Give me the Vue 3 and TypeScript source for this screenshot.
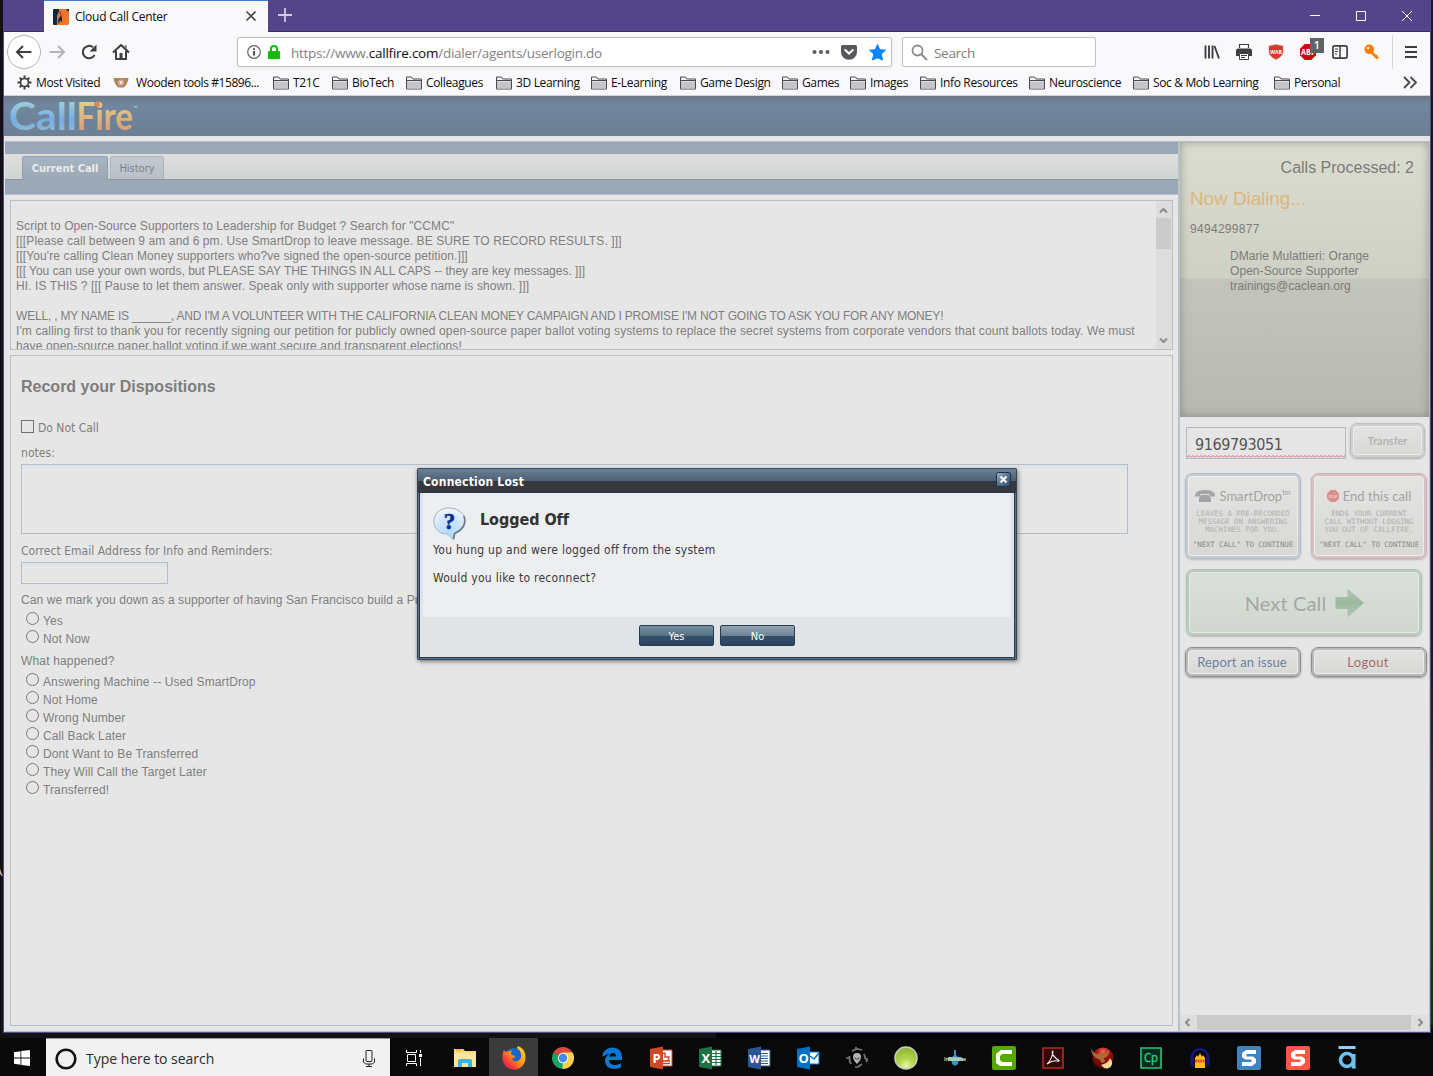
<script setup lang="ts">
import { ref } from 'vue'

interface Bookmark { label: string; kind: 'gear' | 'bowl' | 'folder' }

const bookmarks: Bookmark[] = [
  { label: 'Most Visited', kind: 'gear' },
  { label: 'Wooden tools #15896...', kind: 'bowl' },
  { label: 'T21C', kind: 'folder' },
  { label: 'BioTech', kind: 'folder' },
  { label: 'Colleagues', kind: 'folder' },
  { label: '3D Learning', kind: 'folder' },
  { label: 'E-Learning', kind: 'folder' },
  { label: 'Game Design', kind: 'folder' },
  { label: 'Games', kind: 'folder' },
  { label: 'Images', kind: 'folder' },
  { label: 'Info Resources', kind: 'folder' },
  { label: 'Neuroscience', kind: 'folder' },
  { label: 'Soc & Mob Learning', kind: 'folder' },
  { label: 'Personal', kind: 'folder' },
]

const scriptLines: string[] = [
  'Script to Open-Source Supporters to Leadership for Budget ? Search for "CCMC"',
  '[[[Please call between 9 am and 6 pm. Use SmartDrop to leave message. BE SURE TO RECORD RESULTS. ]]]',
  "[[[You're calling Clean Money supporters who?ve signed the open-source petition.]]]",
  '[[[ You can use your own words, but PLEASE SAY THE THINGS IN ALL CAPS -- they are key messages. ]]]',
  'HI. IS THIS ? [[[ Pause to let them answer. Speak only with supporter whose name is shown. ]]]',
  '',
  "WELL, , MY NAME IS ______, AND I'M A VOLUNTEER WITH THE CALIFORNIA CLEAN MONEY CAMPAIGN AND I PROMISE I'M NOT GOING TO ASK YOU FOR ANY MONEY!",
  "I'm calling first to thank you for recently signing our petition for publicly owned open-source paper ballot voting systems to replace the secret systems from corporate vendors that count ballots today. We must",
  'have open-source paper ballot voting if we want secure and transparent elections!',
]

const support = ['Yes', 'Not Now']
const outcomes = [
  'Answering Machine -- Used SmartDrop', 'Not Home', 'Wrong Number', 'Call Back Later',
  'Dont Want to Be Transferred', 'They Will Call the Target Later', 'Transferred!',
]
const supportAnswer = ref('')
const outcome = ref('')
</script>

<template>
  <div class="desktop">
    <span class="desk-label">A</span>
    <div class="window">
      <header class="titlebar">
        <div class="tab">
          <svg class="fav" viewBox="0 0 16 16"><rect width="16" height="16" rx="1.5" fill="#f0752b" /><path d="M1 0h5v2l2 2 1 9-2-2-1 4-2 1H1.500Q0 16 0 14.500V1Q0 0 1 0z" fill="#0c2840" /><path d="M4 7l2-5 2 4v5l-2-3-1 4 1 4H4z" fill="#f0752b" /><path d="M7 6l2 3v4l-2-2z" fill="#0c2840" /><path d="M13 0h3v3z" fill="#0c2840" /></svg>
          <span class="tab-title">Cloud Call Center</span>
          <svg class="tab-x" viewBox="0 0 12 12"><path d="M1.500 1.500l9 9M10.500 1.500l-9 9" stroke="#444" stroke-width="1.600" /></svg>
        </div>
        <svg class="plus" viewBox="0 0 14 14"><path d="M7 0v14M0 7h14" stroke="#cfc9e2" stroke-width="1.800" /></svg>
        <div class="winbtns">
          <svg viewBox="0 0 12 12"><path d="M1 5.500h10" stroke="#fff" /></svg>
          <svg viewBox="0 0 12 12"><path d="M1.500 1.500h9v9h-9z" fill="none" stroke="#fff" /></svg>
          <svg viewBox="0 0 12 12"><path d="M1 1l10 10M11 1L1 11" stroke="#fff" /></svg>
        </div>
      </header>

      <div class="navbar">
        <div class="navbtns">
          <span class="back"><svg width="18" height="18" viewBox="0 0 18 18"><path d="M16.500 9H2M8 3L2 9l6 6" fill="none" stroke="#3e3e42" stroke-width="2" /></svg></span>
          <svg class="fwd" width="18" height="18" viewBox="0 0 18 18"><path d="M1.500 9H16M10 3l6 6-6 6" fill="none" stroke="#b4b4b8" stroke-width="2" /></svg>
          <svg class="reload" width="18" height="18" viewBox="0 0 18 18"><path d="M14.500 12A6.200 6.200 0 1 1 13 4.300" fill="none" stroke="#3e3e42" stroke-width="2" /><path d="M16.500 1.500v7h-7z" fill="#3e3e42" /></svg>
          <svg class="home" width="18" height="18" viewBox="0 0 18 18"><path d="M1 9.500l8-7.500 8 7.500M4 8v8h10V8" fill="none" stroke="#3e3e42" stroke-width="2" stroke-linejoin="round" /><path d="M7.500 10h3v6h-3z" fill="#3e3e42" /><path d="M12.500 2.500h2v4z" fill="#3e3e42" /></svg>
        </div>
        <div class="urlbar">
          <svg width="14" height="14" viewBox="0 0 14 14"><circle cx="7" cy="7" r="6.300" fill="none" stroke="#666" stroke-width="1.200" /><path d="M6 6h2v4.500H6zM6 3.300h2v1.600H6z" fill="#555" /></svg>
          <svg class="lock" width="12" height="14" viewBox="0 0 12 14"><path d="M3 7V4a3 3 0 0 1 6 0v3" fill="none" stroke="#12bc00" stroke-width="2" /><rect y="6" width="12" height="8" rx="1" fill="#12bc00" /></svg>
          <span class="url">https://www.<b>callfire.com</b>/dialer/agents/userlogin.do</span>
          <svg class="dots" width="18" height="6" viewBox="0 0 18 6"><circle cx="2.500" cy="3" r="2" /><circle cx="9" cy="3" r="2" /><circle cx="15.500" cy="3" r="2" /></svg>
          <svg class="pocket" width="16" height="15" viewBox="0 0 16 15"><path d="M1.500 0h13Q16 0 16 1.500V7A8 7.700 0 0 1 0 7V1.500Q0 0 1.500 0z" fill="#58585c" /><path d="M4.200 5L8 8.600 11.800 5" fill="none" stroke="#fff" stroke-width="2" stroke-linecap="round" /></svg>
          <svg width="17" height="17" viewBox="0 0 17 17"><path d="M8.500.5l2.300 5.200 5.700.5-4.300 3.800 1.400 6-5.100-2.200L3.400 16l1.400-6L.5 6.200l5.700-.5z" fill="#0a84ff" stroke="#0a84ff" stroke-linejoin="round" /></svg>
        </div>
        <div class="searchbar">
          <svg width="17" height="17" viewBox="0 0 17 17"><circle cx="6.500" cy="6.500" r="5" fill="none" stroke="#8c8c8c" stroke-width="1.800" /><path d="M10 10l6 6" stroke="#8c8c8c" stroke-width="2" /></svg>
          <span>Search</span>
        </div>
        <div class="tools">
          <svg viewBox="0 0 16 16"><path d="M1.500 1.500v13M5 1.500v13M8.500 1.500v13M10.500 2l4.500 12.500" stroke="#3e3e42" stroke-width="1.900" fill="none" /></svg>
          <svg viewBox="0 0 16 16"><path d="M3.500 4V.5h9V4" fill="#fff" stroke="#3e3e42" stroke-width="1.200" /><path d="M2 4.500h12q2 0 2 2V12h-3V9.500H3V12H0V6.500q0-2 2-2z" fill="#3e3e42" /><path d="M3.500 9.500h9v6h-9z" fill="#fff" stroke="#3e3e42" /><path d="M5 11.500h6M5 13.500h4" stroke="#3e3e42" /></svg>
          <svg viewBox="0 0 16 16"><path d="M1 2l7-1.500L15 2v6q-.5 5-7 7.500Q1.500 13 1 8z" fill="#d33a2c" stroke="#e88a80" stroke-width=".6" /><text x="2.300" y="9.500" font-size="6" font-weight="700" textLength="11.500" lengthAdjust="spacingAndGlyphs" fill="#fff">WAB</text></svg>
          <div class="abp">
            <svg viewBox="0 0 16 16"><path d="M4.700 0h6.600L16 4.700v6.600L11.300 16H4.700L0 11.300V4.700z" fill="#c70d0d" /><text x="1" y="11" font-size="8" font-weight="700" textLength="14.500" lengthAdjust="spacingAndGlyphs" fill="#fff">ABP</text></svg>
            <span class="badge">1</span>
          </div>
          <svg viewBox="0 0 16 16"><rect x=".9" y="1.900" width="14.200" height="12.200" rx="1.800" fill="none" stroke="#3e3e42" stroke-width="1.700" /><path d="M8 2v12" stroke="#3e3e42" stroke-width="1.500" /><path d="M3 5h3M3 7.500h3M3 10h2" stroke="#3e3e42" /></svg>
          <svg viewBox="0 0 16 16"><circle cx="5.300" cy="5.300" r="4.800" fill="#ff7b00" /><circle cx="4" cy="4" r="1.200" fill="#fff" /><path d="M7.500 8.500l6.500 6" stroke="#ff7b00" stroke-width="2.600" /><path d="M11 14l2-3" stroke="#ff7b00" stroke-width="1.500" /></svg>
          <i class="sep" />
          <svg class="burger" viewBox="0 0 14 14"><path d="M1 2h12M1 7h12M1 12h12" stroke="#3e3e42" stroke-width="2" /></svg>
        </div>
      </div>

      <nav class="bookmarks">
        <span v-for="b in bookmarks" :key="b.label" class="bm" :class="b.kind">
          <svg v-if="b.kind === 'gear'" width="15" height="15" viewBox="0 0 15 15"><circle cx="7.500" cy="7.500" r="4" fill="none" stroke="#3e3e42" stroke-width="1.700" /><path d="M7.500 .5v3M7.500 11.500v3M.5 7.500h3M11.500 7.500h3M2.700 2.700l2 2M10.300 10.300l2 2M12.300 2.700l-2 2M4.700 10.300l-2 2" stroke="#3e3e42" stroke-width="2" /></svg>
          <svg v-else-if="b.kind === 'bowl'" width="16" height="12" viewBox="0 0 16 12"><path d="M.5 1h15q-1 7-5 9.500h-5Q1.500 8 .5 1z" fill="#a98a58" /><circle cx="8" cy="5.500" r="3" fill="#e5a3a0" /><circle cx="8" cy="5.500" r="1.200" fill="#fff" /></svg>
          <svg v-else width="16" height="14" viewBox="0 0 16 14"><path d="M.5 13V1h5l1.500 2h8.500v10z" fill="#f4f4f5" stroke="#4a4a4f" stroke-linejoin="round" /><path d="M1 5.500h14v7H1z" fill="#c6c6c8" /><path d="M.5 4.500h15" stroke="#4a4a4f" /></svg>
          <span>{{ b.label }}</span>
        </span>
        <svg class="more" width="14" height="13" viewBox="0 0 14 13"><path d="M1 1l5.500 5.500L1 12M7.500 1L13 6.500 7.500 12" fill="none" stroke="#4a4a4f" stroke-width="1.900" /></svg>
      </nav>

      <div class="brand">
        <svg width="132" height="38" viewBox="0 0 132 38">
          <defs>
            <linearGradient id="ice" x1="0" y1="0" x2="0" y2="1"><stop offset=".2" stop-color="#a3cdd9" /><stop offset=".6" stop-color="#75aee2" /><stop offset=".85" stop-color="#8cb8d4" /></linearGradient>
            <linearGradient id="fire" x1="0" y1="0" x2="0" y2="1"><stop offset=".2" stop-color="#dfd386" /><stop offset=".5" stop-color="#e0b87e" /><stop offset=".85" stop-color="#dc9d7c" /></linearGradient>
          </defs>
          <text x="2" y="34" font-size="38" textLength="68" lengthAdjust="spacingAndGlyphs" fill="url(#ice)">Call</text>
          <text x="69.500" y="34" font-size="38" textLength="56.500" lengthAdjust="spacingAndGlyphs" fill="url(#fire)">Fire</text>
          <path d="M89.500 11q-3-3 0-6 1 2 2 0 3 4 0 6z" fill="#da8a55" />
          <text x="126.500" y="14" font-size="5.500" fill="#c6cdd4">™</text>
        </svg>
      </div>

      <main class="page">
        <section class="left">
          <div class="stripe" />
          <div class="tabs">
            <span class="ptab on">Current Call</span>
            <span class="ptab off">History</span>
          </div>
          <div class="stripe low" />
          <div class="script">
            <div class="script-text">
              <p v-for="(l, i) in scriptLines" :key="i" :class="'l' + i">{{ l }}</p>
            </div>
            <div class="vscroll">
              <svg width="9" height="7" viewBox="0 0 9 7"><path d="M1 5.500L4.500 2 8 5.500" fill="none" stroke="#8b8b8b" stroke-width="2" /></svg>
              <i />
              <svg width="9" height="7" viewBox="0 0 9 7"><path d="M1 1.500L4.500 5 8 1.500" fill="none" stroke="#8b8b8b" stroke-width="2" /></svg>
            </div>
          </div>
          <form class="form" @submit.prevent>
            <h2>Record your Dispositions</h2>
            <label class="dnc"><input type="checkbox"><span>Do Not Call</span></label>
            <label class="lbl notes">notes:</label>
            <textarea />
            <label class="lbl email">Correct Email Address for Info and Reminders:</label>
            <input class="txt" type="text">
            <p class="q q1">Can we mark you down as a supporter of having San Francisco build a Pu</p>
            <label v-for="s in support" :key="s" class="radio"><input v-model="supportAnswer" type="radio" name="support" :value="s"><span>{{ s }}</span></label>
            <p class="q q2">What happened?</p>
            <label v-for="o in outcomes" :key="o" class="radio"><input v-model="outcome" type="radio" name="outcome" :value="o"><span>{{ o }}</span></label>
          </form>
        </section>

        <aside class="right">
          <div class="status">
            <div class="processed">Calls Processed: 2</div>
            <div class="dialing">Now Dialing...</div>
            <div class="number">9494299877</div>
            <div class="contact">DMarie Mulattieri: Orange<br>Open-Source Supporter<br>trainings@caclean.org</div>
          </div>
          <div class="xfer">
            <div class="phone"><span>9169793051</span>
              <svg width="158" height="3" viewBox="0 0 158 3"><defs><pattern id="zig" width="4" height="3" patternUnits="userSpaceOnUse"><path d="M0 2.500L2 .5l2 2" fill="none" stroke="#d06c6c" stroke-width="1" /></pattern></defs><rect width="158" height="3" fill="url(#zig)" /></svg>
            </div>
            <button class="btn transfer">Transfer</button>
          </div>
          <div class="pair">
            <button class="btn card blue">
              <span class="head"><svg width="20" height="12" viewBox="0 0 20 12"><path d="M0 5Q1 0 10 0t10 5v1.500h-5.500V4h-9v2.500H0z" fill="#a3a4a4" /><path d="M6.500 5h7l2.500 3v4H4V8z" fill="#a3a4a4" /></svg><em>SmartDrop</em><sup>tm</sup></span>
              <small>LEAVES A PRE-RECORDED<br>MESSAGE ON ANSWERING<br>MACHINES FOR YOU.</small>
              <small class="next-note">"NEXT CALL" TO CONTINUE</small>
            </button>
            <button class="btn card red">
              <span class="head"><svg width="12" height="12" viewBox="0 0 12 12"><path d="M3.500 0h5L12 3.500v5L8.500 12h-5L0 8.500v-5z" fill="#db8f8c" /><text x="1.500" y="7.500" font-size="4" textLength="9" fill="#f3dcdb">STOP</text></svg><em>End this call</em></span>
              <small>ENDS YOUR CURRENT<br>CALL WITHOUT LOGGING<br>YOU OUT OF CALLFIRE.</small>
              <small class="next-note">"NEXT CALL" TO CONTINUE</small>
            </button>
          </div>
          <button class="btn next"><span>Next Call</span><svg width="30" height="30" viewBox="0 0 30 30"><defs><linearGradient id="arr" x1="0" y1="0" x2="0" y2="1"><stop offset="0" stop-color="#b1c8b2" /><stop offset=".5" stop-color="#9cb89f" /><stop offset="1" stop-color="#b4c9b3" /></linearGradient></defs><path d="M.5 9h12V.5L29 15 12.500 29.500V21H.5z" fill="url(#arr)" /></svg></button>
          <div class="pair low">
            <button class="btn small issue">Report an issue</button>
            <button class="btn small logout">Logout</button>
          </div>
          <div class="hscroll">
            <svg width="7" height="9" viewBox="0 0 7 9"><path d="M5.500 1L2 4.500 5.500 8" fill="none" stroke="#8b8b8b" stroke-width="2" /></svg>
            <i />
            <svg width="7" height="9" viewBox="0 0 7 9"><path d="M1.500 1L5 4.500 1.500 8" fill="none" stroke="#8b8b8b" stroke-width="2" /></svg>
          </div>
        </aside>
      </main>

      <div class="dialog" role="dialog">
        <div class="dlg-title"><span>Connection Lost</span>
          <svg width="15" height="15" viewBox="0 0 15 15"><defs><linearGradient id="cls" x1="0" y1="0" x2="1" y2="1"><stop offset="0" stop-color="#a9b8c6" /><stop offset=".5" stop-color="#56728c" /><stop offset="1" stop-color="#2c4964" /></linearGradient></defs><rect x=".5" y=".5" width="14" height="14" rx="2" fill="url(#cls)" stroke="#19324b" /><path d="M4.500 4.500l6 6M10.500 4.500l-6 6" stroke="#f3f5f7" stroke-width="2.400" /></svg>
        </div>
        <div class="dlg-body">
          <div class="dlg-head">
            <svg width="34" height="34" viewBox="0 0 34 34"><defs><radialGradient id="bub" cx=".5" cy=".8" r=".8"><stop offset="0" stop-color="#b0dcff" /><stop offset=".6" stop-color="#cfe5fb" /><stop offset="1" stop-color="#f4f8fc" /></radialGradient></defs><path d="M16 1C25 1 32 6.500 32 14.500c0 6-4 10-10 12l-1.500 6.500-6-6C6 27 1 22 1 14.500 1 6.500 7 1 16 1z" fill="url(#bub)" stroke="#a8b0ba" /><path d="M31 9q3 10-6 15.500l-3.500 2-1 5.500" fill="none" stroke="#6b7786" stroke-width="1.600" /><text x="16.500" y="22" text-anchor="middle" font-family="Liberation Serif" font-weight="700" font-size="23" fill="#0b2e86" stroke="#0b2e86" stroke-width=".6">?</text></svg>
            <strong>Logged Off</strong>
          </div>
          <p class="m1">You hung up and were logged off from the system</p>
          <p class="m2">Would you like to reconnect?</p>
        </div>
        <div class="dlg-foot"><button>Yes</button><button class="no">No</button></div>
      </div>
    </div>

    <footer class="taskbar">
      <div class="start"><svg width="16" height="16" viewBox="0 0 16 16"><path d="M0 2.200L6.500 1.200V7.600H0zM7.300 1.100L16 0V7.600H7.300zM0 8.400h6.500v6.400L0 13.800zM7.300 8.400H16V16L7.300 14.900z" fill="#fff" /></svg></div>
      <div class="tsearch">
        <svg width="22" height="22" viewBox="0 0 22 22"><circle cx="11" cy="11" r="9.300" fill="none" stroke="#111" stroke-width="2.600" /></svg>
        <span>Type here to search</span>
        <svg class="mic" width="12" height="17" viewBox="0 0 12 17"><rect x="3" y=".5" width="6" height="11" rx=".8" fill="none" stroke="#222" /><path d="M.5 8.500V12l2 2h7l2-2V8.500M6 14v2.500M3 16.500h6" fill="none" stroke="#222" /></svg>
      </div>
      <div class="app tv"><svg width="16" height="16" viewBox="0 0 16 16"><path d="M.5 0v2.500h10V0M.5 16v-2.500h10V16M1.500 4.500h8v7h-8zM14.500 0v3M14.500 8v8" fill="none" stroke="#fff" /><path d="M13 4h3v3h-3z" fill="#fff" /></svg></div>
      <div class="app"><svg width="24" height="24" viewBox="0 0 24 24"><path d="M1 3h9l2 2h11v16H1z" fill="#f8d775" /><path d="M1 7h22v14H1z" fill="#fbe59b" /><path d="M5 21v-6q0-2 2-2h10q2 0 2 2v6h-4v-4H9v4z" fill="#3fb1dd" /><path d="M3 4h5" stroke="#dca92f" /></svg></div>
      <div class="app active"><svg width="24" height="24" viewBox="0 0 24 24"><defs><linearGradient id="fx" x1="1" y1="0" x2="0" y2="1"><stop offset="0" stop-color="#ffe226" /><stop offset=".45" stop-color="#ff9a17" /><stop offset=".75" stop-color="#f8333c" /><stop offset="1" stop-color="#e3158a" /></linearGradient></defs><circle cx="12" cy="12" r="10" fill="#1767c9" /><path d="M2 4q1 2 3 2 3-2 5-1-2 2 0 4 3 0 3 2l-3 2q1 3 5 2 5-1 4-7-1-4-4-6l1-2q8 3 7.500 12A11.500 11.500 0 0 1 .5 12Q0 8 2 4z" fill="url(#fx)" /></svg></div>
      <div class="app"><svg width="22" height="22" viewBox="0 0 22 22"><path d="M11 11L1.500 5.500A11 11 0 0 1 20.500 5.500z" fill="#dc4a3d" /><path d="M11 11L1.500 5.500A11 11 0 0 0 11 22l5-8z" fill="#1da462" /><path d="M11 11l-.5 11A11 11 0 0 0 20.500 5.500H11z" fill="#fdd04c" /><circle cx="11" cy="11" r="5.200" fill="#f4f4f4" /><circle cx="11" cy="11" r="4.200" fill="#4587f3" /></svg></div>
      <div class="app"><svg width="20" height="22" viewBox="0 0 20 22"><path d="M0 10Q1 1 10.500.5 20 1 20 10v3H7q.5 5 6 5 3 0 6-1.800v4Q16 22 12 22 3 21.500 3 13.500 3 9 8 7 4 7 0 10zM7.500 9.500H14Q14 6 11 6T7.500 9.500z" fill="#0c78d4" /></svg></div>
      <div class="app"><svg width="24" height="24" viewBox="0 0 24 24"><path d="M11 4h12v16H11z" fill="#fff" stroke="#d24726" /><path d="M16 7v4h4a4 4 0 1 1-4-4M13 15h8M13 17.500h8" fill="none" stroke="#d24726" stroke-width="1.500" /><path d="M1 3L14 .5v23L1 21z" fill="#d24726" /><text x="3.500" y="17" font-size="13" font-weight="700" fill="#fff">P</text></svg></div>
      <div class="app"><svg width="24" height="24" viewBox="0 0 24 24"><path d="M11 4h12v16H11z" fill="#fff" stroke="#1e7145" /><path d="M14 7.500h9M14 10.500h9M14 13.500h9M14 16.500h9M18 5v14" stroke="#1e7145" stroke-width="1.200" /><path d="M1 3L14 .5v23L1 21z" fill="#1e7145" /><text x="3.500" y="17" font-size="13" font-weight="700" fill="#fff">X</text></svg></div>
      <div class="app"><svg width="24" height="24" viewBox="0 0 24 24"><path d="M11 4h12v16H11z" fill="#fff" stroke="#2b579a" /><path d="M14 7.500h7M14 10h7M14 12.500h7M14 15h7M14 17.500h7" stroke="#2b579a" /><path d="M1 3L14 .5v23L1 21z" fill="#2b579a" /><text x="2.300" y="16.500" font-size="11" font-weight="700" fill="#fff">W</text></svg></div>
      <div class="app"><svg width="24" height="24" viewBox="0 0 24 24"><path d="M12 6h11v12H12z" fill="#fff" stroke="#0072c6" /><path d="M14 10l4 3 5-6" fill="none" stroke="#0072c6" stroke-width="1.500" /><path d="M1 3L14 .5v23L1 21z" fill="#0072c6" /><text x="2.600" y="17" font-size="13" font-weight="700" fill="#fff">O</text></svg></div>
      <div class="app"><svg width="22" height="22" viewBox="0 0 22 22"><path d="M11 6q4 0 4 4 0 3-4 7-4-4-4-7 0-4 4-4z" fill="#b5b5b5" /><path d="M8 10l2.500 1.500v1.500zM14 10l-2.500 1.500v1.500z" fill="#111" /><path d="M6 4Q9 2 12 2l4 1M18 7l1.500 5M16 17l-4 3H9M5 17q-2-3-1.500-8M0 11h3M19 12h3l-2 3M10 0v3" fill="none" stroke="#777" stroke-width="1.700" /></svg></div>
      <div class="app"><svg width="24" height="24" viewBox="0 0 24 24"><defs><radialGradient id="lime" cx=".5" cy=".85" r=".8"><stop offset="0" stop-color="#ecf8b0" /><stop offset=".4" stop-color="#b4d84a" /><stop offset="1" stop-color="#8db63c" /></radialGradient></defs><circle cx="12" cy="12" r="11" fill="url(#lime)" stroke="#c9cec2" stroke-width="1.500" /></svg></div>
      <div class="app"><svg width="22" height="18" viewBox="0 0 22 18"><path d="M10 1h2v5l3 3-1 6-3 2-3-2-1-6 3-3z" fill="#3d8ebf" /><path d="M4 8h13l4 3-4 1H4z" fill="#69b6de" /><text x="0" y="12" font-size="5" font-weight="700" textLength="22" fill="#d9d58c">InfoVerse</text></svg></div>
      <div class="app"><svg width="24" height="24" viewBox="0 0 24 24"><rect width="24" height="24" rx="2" fill="#55a800" /><path d="M20 4H9L4 8v9l4 3h12v-4H10l-2-2v-4l2-2h10z" fill="#fff" /></svg></div>
      <div class="app"><svg width="22" height="22" viewBox="0 0 22 22"><path d="M1 1h20v20H1z" fill="#300a09" stroke="#b52b22" stroke-width="1.600" /><path d="M5 17q4-3 6-12 0-1.500-.8-.5-.7 4 6.800 9 .5.8-1 .5-5-1-11 3z" fill="none" stroke="#f2eeee" stroke-width="1.100" /></svg></div>
      <div class="app"><svg width="24" height="24" viewBox="0 0 24 24"><defs><radialGradient id="ruby" cx=".5" cy=".2" r=".8"><stop offset="0" stop-color="#ee6b58" /><stop offset=".4" stop-color="#a50f12" /><stop offset="1" stop-color="#4e0505" /></radialGradient></defs><circle cx="13" cy="12" r="10.500" fill="url(#ruby)" /><path d="M1 2q2 6 8 6l2-2 3 2 5-4q1 6-5 8l1 4-3 1-3-4Q1 11 1 2z" fill="#ab6a30" /><path d="M11 19q8-2 9-7 4 5 .5 9-5 4-9.500-2z" fill="#f0dd92" /></svg></div>
      <div class="app"><svg width="22" height="22" viewBox="0 0 22 22"><path d="M1 1h20v20H1z" fill="#042b1d" stroke="#27c47c" stroke-width="1.600" /><text x="4" y="15" font-size="12.500" textLength="14" lengthAdjust="spacingAndGlyphs" fill="#31cf86" stroke="#31cf86" stroke-width=".4">Cp</text></svg></div>
      <div class="app"><svg width="22" height="22" viewBox="0 0 22 22"><path d="M3 14V10a8 8 0 0 1 16 0v4" fill="none" stroke="#151a9e" stroke-width="2" /><path d="M1 11h4v8H3q-2-1-2-4zM21 11h-4v8h2q2-1 2-4z" fill="#11156f" /><path d="M6 21V11l2-3 1 2 2-4 2 4 1-2 2 3v10z" fill="#ffbd20" /><path d="M6 14h10" stroke="#f34a1c" stroke-width="3" stroke-dasharray="2 .6" /></svg></div>
      <div class="app"><svg width="24" height="24" viewBox="0 0 24 24"><rect width="24" height="24" rx="2" fill="#3f83bf" /><path d="M19 4H9L5 7v4l3 2.500h6.500V16H5v4h10l4-3v-4l-3-2.500H9.500V8H19z" fill="#fff" /></svg></div>
      <div class="app"><svg width="24" height="24" viewBox="0 0 24 24"><rect width="24" height="24" rx="2" fill="#fb5648" /><path d="M19 4H9L5 7v4l3 2.500h6.500V16H5v4h10l4-3v-4l-3-2.500H9.500V8H19z" fill="#fff" /></svg></div>
      <div class="app"><svg width="18" height="24" viewBox="0 0 18 24"><path d="M.5 0h17v3H.5z" fill="#8fd0f2" /><circle cx="9" cy="14" r="6.500" fill="none" stroke="#6cc1f0" stroke-width="3.600" /><path d="M13.800 8h3.700v12l.5 2.500h-4.200z" fill="#6cc1f0" /></svg></div>
    </footer>
  </div>
</template>

<style>
html, body { margin: 0; overflow: hidden; }
</style>

<style scoped>
* { box-sizing: border-box; }
.desktop { position: relative; width: 1433px; height: 1076px; overflow: hidden; display: flex; flex-direction: column; font-family: "Open Sans", "Noto Sans", sans-serif; white-space: nowrap;
  background: linear-gradient(90deg, #131118 0 50%, transparent 50%), linear-gradient(#1c1428 0 60%, #3b2630 75%, #1f3d14 80%, #172d10 95%, #020204 96%); }
.desk-label { position: absolute; left: -4px; top: 865px; font-size: 10px; color: #d5dbe5; }
p, h2 { margin: 0; }
svg { display: block; flex: none; }
button { font-family: inherit; cursor: pointer; }
.window { position: relative; width: 1428px; height: 1033px; margin-left: 3px; border: 1px solid #574b80; border-top: 0; background: #e6e6e6; display: flex; flex-direction: column; }

.titlebar { height: 32px; background: #54458a; border-bottom: 1px solid #3b2c63; display: flex; align-items: center; padding-left: 40px; margin-left: -1px; flex: none; }
.tab { width: 224px; height: 32px; margin-bottom: -1px; margin-left: 1px; background: #f9f9fb; border-top: 1px solid #3a7fce; display: flex; align-items: center; padding: 0 11px 0 9px; }
.fav { width: 16px; height: 16px; }
.tab-title { font-size: 12px; letter-spacing: -.24px; color: #0c0c0d; margin-left: 6px; margin-top: -1px; flex: 1; }
.tab-x { width: 12px; height: 12px; margin-top: -1px; }
.plus { width: 14px; height: 14px; margin-left: 10px; margin-top: -1px; }
.winbtns { margin-left: auto; display: flex; gap: 34px; padding-right: 17px; }
.winbtns svg { width: 12px; height: 12px; }

.navbar { height: 40px; background: #f9f9fb; display: flex; align-items: center; flex: none; }
.navbtns { width: 233px; display: flex; align-items: center; padding-left: 3px; }
.back { width: 34px; height: 34px; border: 1px solid #b3b3b6; border-radius: 50%; background: #fff; display: grid; place-items: center; }
.fwd { margin-left: 7px; }
.reload { margin-left: 14px; }
.home { margin-left: 14px; }
.urlbar { width: 655px; height: 30px; border: 1px solid #c0c0c3; border-radius: 2px; background: #fff; display: flex; align-items: center; padding: 0 5px 0 9px; box-shadow: 0 1px 4px rgba(0,0,0,.05); }
.lock { margin-left: 7px; }
.url { flex: 1; margin-left: 11px; padding-top: 1px; font-size: 13.500px; letter-spacing: -.26px; color: #808084; }
.url b { font-weight: 400; color: #0c0c0d; }
.dots { fill: #5c5c60; margin-right: 11px; }
.pocket { margin-right: 12px; }
.searchbar { width: 194px; height: 30px; margin-left: 10px; border: 1px solid #c0c0c3; border-radius: 2px; background: #fff; display: flex; align-items: center; gap: 6px; padding-left: 8px; font-size: 13.500px; letter-spacing: -.3px; color: #7b7b7d; }
.searchbar span { padding-top: 1px; }
.tools { margin-left: 108px; display: flex; align-items: center; gap: 16px; }
.tools > svg, .abp svg { width: 16px; height: 16px; }
.abp { position: relative; width: 16px; }
.badge { position: absolute; left: 10px; top: -6px; width: 14px; height: 15px; background: #5f6365; color: #fff; font-size: 11px; line-height: 14px; text-align: center; font-weight: 600; }
.tools .sep { width: 1px; height: 34px; background: #d7d7da; margin-left: -4px; }
.tools svg.burger { width: 14px; height: 14px; margin-left: -5px; }

.bookmarks { height: 24px; background: #f9f9fb; border-bottom: 1px solid #d3d3d6; flex: none; display: grid; align-items: center; padding: 0 0 2px 13px; font-size: 12px; color: #0c0c0d; letter-spacing: -.35px;
  grid-template-columns: 96px 160px 59px 74px 90px 95px 89px 102px 68px 70px 109px 104px 141px 129px 14px; }
.bm { display: flex; align-items: center; gap: 4px; }
.bm.bowl { gap: 7px; letter-spacing: -.42px; }
.brand { height: 40px; flex: none; background: linear-gradient(#6c7a86, #70879e 22%, #6c7f95); padding-left: 3px; }
.brand svg { font-family: Lato, sans-serif; font-weight: 700; overflow: visible; }

.page { flex: 1; min-height: 0; margin-top: 5px; border-top: 1px solid #b9c2ca; border-bottom: 1px solid #b9c0cb; display: flex; font-family: "Liberation Sans", Arial, sans-serif; color: #7f7f7f; font-size: 12px; margin-left: 1px; }
.left { width: 1173px; display: flex; flex-direction: column; }
.stripe { height: 12px; background: #9ba8b5; flex: none; }
.stripe.low { height: 15px; border-bottom: 1px solid #b9c2ca; }
.tabs { height: 26px; flex: none; background: linear-gradient(#dfdfdf, #d1d3d3); border-bottom: 1px solid #8b98a4; display: flex; align-items: flex-end; padding-left: 17px; gap: 2px; font-family: "DejaVu Sans Condensed", "DejaVu Sans", sans-serif; }
.ptab { display: grid; place-items: center; border: 1px solid #8fa0b0; border-bottom: 0; border-radius: 3px 3px 0 0; height: 23px; }
.ptab.on { width: 86px; height: 24px; margin-bottom: -1px; font-size: 11px; font-weight: 700; color: #e8ebee; background: linear-gradient(#a6b5c3, #9ba8b5); }
.ptab.off { width: 54px; font-size: 11px; color: #7c828a; background: linear-gradient(#c3c9cf, #b8c0c8); border-color: #acb5be; }
.script { height: 150px; margin: 5px 5px 0; border: 1px solid #b7c0c9; display: flex; flex: none; overflow: hidden; }
.script-text { flex: 1; padding: 18px 0 0 5px; overflow: hidden; line-height: 15px; }
.script-text p { height: 15px; }
.l0 { letter-spacing: .08px; }
.l1, .l2 { letter-spacing: .1px; }
.l3 { letter-spacing: -.02px; }
.l4 { letter-spacing: .09px; }
.l6 { letter-spacing: -.2px; }
.l7 { letter-spacing: .11px; }
.l8 { letter-spacing: .136px; }
.vscroll { width: 16px; padding: 6px 1px 5px 0; background: #dddddd; display: flex; flex-direction: column; align-items: center; }
.vscroll i { width: 15px; height: 31px; background: #cbcbcb; margin: 4px 0 auto; }
.form { height: 671px; margin: 5px 5px 0; border: 1px solid #b7c0c9; padding: 21px 0 0 10px; }
.form h2 { height: 20px; line-height: 20px; font-size: 16px; color: #7d7d7d; }
.dnc { height: 18px; margin-top: 22px; display: flex; align-items: center; gap: 4px; font-family: "DejaVu Sans Condensed", sans-serif; font-size: 12px; }
.dnc input { appearance: none; width: 13px; height: 13px; margin: 0; border: 1px solid #727272; position: relative; top: -2px; }
.lbl { display: block; height: 18px; line-height: 18px; margin-top: 7px; font-family: "DejaVu Sans Condensed", sans-serif; font-size: 12px; letter-spacing: .05px; }
.lbl.email { margin-top: 8px; }
textarea, .txt { display: block; margin: 2px 0 0; padding: 0; border: 1px solid #b3bdc7; background: linear-gradient(#dfe1e3, #e6e6e6 5px); resize: none; border-radius: 0; outline: 0; }
textarea { width: 1107px; height: 70px; }
.txt { width: 147px; height: 22px; }
.q { height: 18px; line-height: 18px; margin-bottom: 3px; letter-spacing: .09px; }
.q1 { margin-top: 7px; }
.q2 { margin-top: 4px; letter-spacing: .16px; }
.radio { height: 18px; display: flex; align-items: center; padding-left: 5px; gap: 4px; letter-spacing: .11px; }
.radio input { appearance: none; width: 13px; height: 13px; margin: 0; border: 1px solid #787878; border-radius: 50%; position: relative; top: -3px; }

.right { width: 252px; border-left: 2px solid #b9c2cb; border-right: 1px solid #b9c2cb; display: flex; flex-direction: column; }
.status { height: 275px; flex: none; padding: 14px 15px 0 10px; background: linear-gradient(#dcddd1, #ced0c4 49.500%, #c3c4bb 50%, #b8b9b1); box-shadow: inset 0 0 10px rgba(90,92,80,.5); }
.processed { height: 22px; line-height: 23px; text-align: right; font-size: 16px; color: #7b7c77; }
.dialing { height: 30px; line-height: 30px; margin-top: 6px; font-size: 19px; letter-spacing: -.1px; color: #dcb77b; }
.number { line-height: 16px; margin-top: 7px; color: #7b7c77; letter-spacing: .3px; }
.contact { line-height: 15px; margin: 12px 0 0 40px; color: #7b7c77; letter-spacing: .06px; }
.btn { border: 1px solid #bfbfbf; border-radius: 7px; background: linear-gradient(#e4e4e3, #d7d8d4); box-shadow: inset 0 0 0 2px #cfcfcf, inset 0 0 0 3px #ececec, 0 1px 2px rgba(0,0,0,.25); font-family: Lato, "Open Sans", sans-serif; color: #a5a5a5; padding: 0; flex: none; }
.xfer { display: flex; gap: 4px; padding: 6px 0 0 6px; }
.phone { width: 160px; height: 32px; margin-top: 4px; border: 1px solid #b0bbc6; background: #e5e5e5; display: flex; flex-direction: column; font-family: "DejaVu Sans Condensed", sans-serif; font-size: 16px; letter-spacing: -.4px; color: #555; }
.phone span { height: 27px; line-height: 33px; padding-left: 8px; }
.transfer { width: 75px; height: 35px; font-size: 11px; font-weight: 700; color: #b5b5b5; }
.pair { display: flex; gap: 10px; padding: 14px 0 0 5px; }
.card { width: 116px; height: 86px; display: flex; flex-direction: column; align-items: center; padding-top: 11px; }
.blue { border-color: #b2bfc9; box-shadow: inset 0 0 0 2px #c1ccd5, inset 0 0 0 3px #ebebeb, 0 1px 2px rgba(0,0,0,.2); }
.red { border-color: #cdb5b5; box-shadow: inset 0 0 0 2px #d6c1c1, inset 0 0 0 3px #ebebeb, 0 1px 2px rgba(0,0,0,.2); }
.head { height: 22px; display: flex; align-items: center; gap: 4px; font-size: 13px; color: #a2a2a2; margin-bottom: 3px; letter-spacing: .05px; }
.head em { font-style: normal; }
.head sup { font-size: 7px; margin: -8px 0 0 -4px; }
.card small { font: 7.400px/8px "DejaVu Sans Mono", monospace; color: #b0b0b0; text-align: center; }
.card small.next-note { color: #8a8a8a; margin-top: 7px; letter-spacing: -.1px; }
.next { width: 236px; height: 67px; margin: 10px 0 0 6px; display: flex; align-items: center; justify-content: center; gap: 9px; font-size: 20px; letter-spacing: .15px; color: #a3a9a3; background: linear-gradient(#dae1da, #d1d7cf); border-color: #b1c2b4; box-shadow: inset 0 0 0 2px #bccabe, inset 0 0 0 3px #e2e8e2, 0 1px 2px rgba(0,0,0,.2); }
.next svg { margin-right: -2px; }
.pair.low { padding-top: 11px; }
.small { width: 116px; height: 30px; font-size: 13px; letter-spacing: .15px; border-color: #909090; box-shadow: inset 0 0 0 2px #b9b9b9, inset 0 0 0 3px #ececec, 0 1px 2px rgba(0,0,0,.35); }
.issue { color: #6c80a2; padding-right: 2px; }
.logout { color: #a8696b; letter-spacing: .3px; padding-right: 2px; }
.hscroll { height: 16px; margin-top: auto; background: #dedede; display: flex; align-items: center; padding: 0 5px 1px 4px; }
.hscroll i { width: 214px; height: 15px; background: #cbcbcb; margin: 0 auto; }

.dialog { position: absolute; left: 413px; top: 468px; width: 600px; height: 192px; border: 1px solid #32475c; border-top: 0; border-radius: 2px; background: #5b7086; box-shadow: 2px 2px 4px rgba(0,0,0,.35), -1px 1px 3px rgba(0,0,0,.2); padding: 0 1px 1px; display: flex; flex-direction: column; font-family: "DejaVu Sans Condensed", "DejaVu Sans", sans-serif; font-size: 12px; color: #333; }
.dlg-title { height: 25px; margin: 0 -1px; flex: none; border-top: 1px solid #3c5064; border-bottom: 1px solid #263b50; background: linear-gradient(#6b8096, #4f6173 50%, #36393d 51%, #35383c); display: flex; align-items: center; justify-content: space-between; padding: 3px 5px 0; color: #fff; font-weight: 700; letter-spacing: .2px; }
.dlg-title svg { margin-top: -5px; }
.dlg-body { height: 124px; flex: none; background: #edeeef; border: 1px solid #253c53; border-width: 0 1px; box-shadow: inset 3px 0 #dfe3e9, inset -3px 0 #dfe3e9; padding: 14px 0 0 13px; }
.dlg-head { height: 34px; display: flex; }
.dlg-head strong { margin-left: 13px; font-size: 16px; line-height: 26px; letter-spacing: -.05px; }
.m1, .m2 { line-height: 18px; color: #3a3a3a; letter-spacing: .27px; }
.m2 { margin-top: 10px; }
.dlg-foot { flex: 1; background: #e0e4e7; border: 1px solid #253c53; border-top: 0; display: flex; justify-content: center; gap: 6px; padding-top: 8px; }
.dlg-foot button { width: 75px; height: 21px; border: 1px solid #263d54; border-radius: 2px; padding: 2px 0 0; color: #fff; font-size: 11px; background: linear-gradient(#7a90a3, #566f86 50%, #33506a 51%, #2c4660); }
.dlg-foot .no { background: linear-gradient(#93a3b3, #6f8497 50%, #33506a 51%, #2c4660); }

.taskbar { height: 38px; margin-top: 5px; background: #090909; display: flex; }
.start { width: 46px; display: flex; align-items: center; justify-content: center; padding: 2px 2px 0 0; }
.tsearch { width: 344px; background: #f1f1f1; border-top: 1px solid #999; display: flex; align-items: center; padding: 2px 15px 0 9px; font-size: 14px; color: #2b2b2b; }
.tsearch span { flex: 1; margin-left: 9px; letter-spacing: -.03px; }
.app { width: 49px; display: grid; place-items: center; padding-top: 1px; flex: none; }
.app.tv { width: 50px; padding-right: 2px; }
.app.active { background: #3b3b3b; }
</style>
